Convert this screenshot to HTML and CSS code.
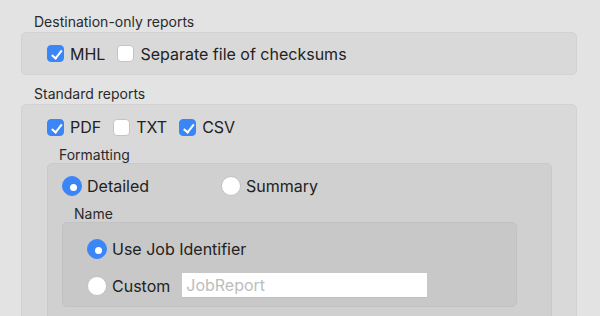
FILE: index.html
```html
<!DOCTYPE html>
<html>
<head>
  <link rel="stylesheet" href="styles.css">
</head>
<body>
  <div class="page">
    <div class="group-title">Destination-only reports</div>
    <div class="box box-dest">
      <div class="row">
        <label class="check"><span class="checkbox checked"></span>MHL</label>
        <label class="check"><span class="checkbox"></span>Separate file of checksums</label>
      </div>
    </div>

    <div class="group-title">Standard reports</div>
    <div class="box box-std">
      <div class="row">
        <label class="check"><span class="checkbox checked"></span>PDF</label>
        <label class="check"><span class="checkbox"></span>TXT</label>
        <label class="check"><span class="checkbox checked"></span>CSV</label>
      </div>

      <div class="sub-title">Formatting</div>
      <div class="box box-format">
        <div class="row format-row">
          <label class="radio-label detailed"><span class="radio checked"></span>Detailed</label>
          <label class="radio-label"><span class="radio"></span>Summary</label>
        </div>

        <div class="sub-title">Name</div>
        <div class="box box-name">
          <label class="radio-label"><span class="radio checked"></span>Use Job Identifier</label>
          <div class="custom-row">
            <label class="radio-label"><span class="radio"></span>Custom</label>
            <input type="text" class="name-input" placeholder="JobReport">
          </div>
        </div>
      </div>
    </div>
  </div>
</body>
</html>
```

FILE: styles.css
```css
body {
  margin: 0;
  padding: 0;
  width: 600px;
  height: 316px;
  overflow: hidden;
  font-family: Inter, "Noto Sans", sans-serif;
  background: #e3e3e3;
  color: #222;
}

.page {
  padding: 14px 23px 0 21px;
}

.group-title {
  font-size: 14px;
  line-height: 16px;
  color: #2a2a2a;
  margin: 0 0 2px 13px;
}

.box {
  border: 1px solid #d2d2d2;
  border-radius: 5px;
  background: #d9d9d9;
}

.box-dest {
  height: 41px;
  display: flex;
  align-items: center;
  padding-left: 25px;
  margin-bottom: 11px;
}

.box-std {
  padding: 13px 24px 0 25px;
  height: 260px;
}

.row {
  display: flex;
  align-items: center;
  gap: 12px;
}

.check {
  display: flex;
  align-items: center;
  gap: 6px;
  font-size: 16px;
  line-height: 18px;
}

.checkbox {
  width: 17px;
  height: 17px;
  box-sizing: border-box;
  border-radius: 4px;
  background: #fff;
  border: 0.5px solid #c4c4c4;
  position: relative;
}

.checkbox.checked {
  background: #3b86f6;
  border-color: #3b86f6;
}

.checkbox.checked::after {
  content: "";
  position: absolute;
  left: 5.5px;
  top: 2px;
  width: 4px;
  height: 8.5px;
  border: solid #fff;
  border-width: 0 2.2px 2.2px 0;
  transform: rotate(38deg);
}

.sub-title {
  font-size: 14px;
  line-height: 16px;
  color: #2a2a2a;
  margin: 11px 0 0 12px;
}

.box-format {
  background: #d0d0d0;
  border-color: #c9c9c9;
  padding: 12px 34px 0 14px;
  height: 200px;
}

.format-row {
  gap: 0;
}

.radio-label {
  display: flex;
  align-items: center;
  gap: 5px;
  font-size: 16px;
  line-height: 20px;
}

.detailed {
  width: 159px;
}

.radio {
  width: 20px;
  height: 20px;
  box-sizing: border-box;
  border-radius: 50%;
  background: #fff;
  border: 0.5px solid #c2c2c2;
  position: relative;
}

.radio.checked {
  background: #3b86f6;
  border-color: #3b86f6;
}

.radio.checked::after {
  content: "";
  position: absolute;
  left: 6.5px;
  top: 6.5px;
  width: 7px;
  height: 7px;
  border-radius: 50%;
  background: #fff;
}

.box-format .sub-title {
  margin-top: 10px;
}

.box-name {
  background: #c8c8c8;
  border-color: #c2c2c2;
  padding: 16px 0 0 24px;
  height: 67px;
  display: flex;
  flex-direction: column;
  gap: 14px;
}

.custom-row {
  display: flex;
  align-items: center;
  gap: 12px;
}

.name-input {
  width: 245px;
  height: 25px;
  box-sizing: border-box;
  border: none;
  border-bottom: 1px solid #c0c0c0;
  background: #fff;
  padding: 0 4px;
  font-family: Inter, "Noto Sans", sans-serif;
  font-size: 16px;
  outline: none;
}

.name-input::placeholder {
  color: #bdbdbd;
}
```
